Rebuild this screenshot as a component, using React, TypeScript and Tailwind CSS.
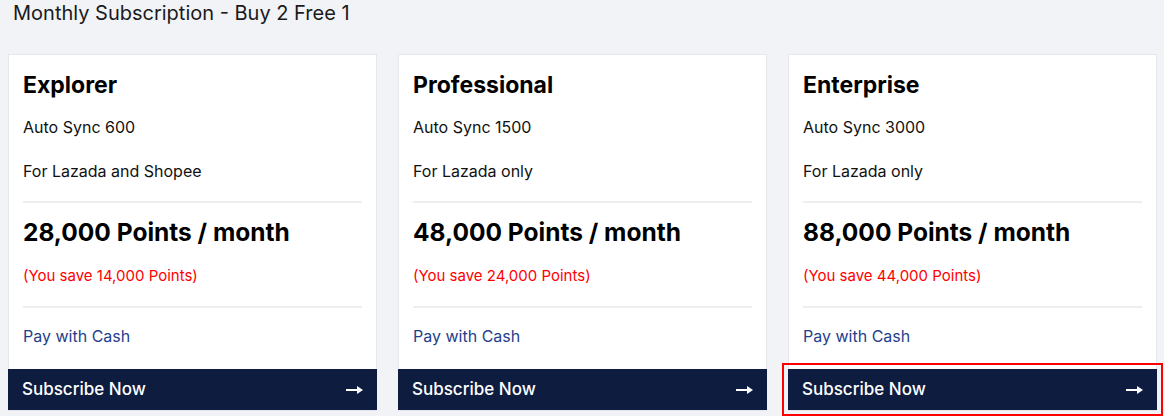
import React from "react";

const plans = [
  { name: "Explorer", sync: "Auto Sync 600", market: "For Lazada and Shopee", price: "28,000", save: "14,000" },
  { name: "Professional", sync: "Auto Sync 1500", market: "For Lazada only", price: "48,000", save: "24,000" },
  { name: "Enterprise", sync: "Auto Sync 3000", market: "For Lazada only", price: "88,000", save: "44,000" },
];

// small arrow: thin shaft, filled head
const Arrow = () => (
  <svg width="17" height="10" viewBox="0 0 17 10" fill="none">
    <rect x="0" y="4" width="12" height="2" fill="white" />
    <path d="M11 1l6 4-6 4z" fill="white" />
  </svg>
);

const App = () => {
  return (
    <div className="h-[416px] w-[1164px] overflow-hidden bg-[#f2f3f7] font-['Inter',sans-serif] text-[#111]">
      <h2 className="pl-[13px] pt-[1px] text-[20px] leading-[24px] font-normal text-[#1a1a1a]">
        Monthly Subscription - Buy 2 Free 1
      </h2>
      <div className="mt-[29px] grid grid-cols-3 gap-x-[21px] pl-[8px] pr-[7px]">
        {plans.map((p, i) => (
          <div key={p.name} className="flex flex-col border border-[#e6e7ea] bg-white">
            <div className="px-[14px] pt-[14px]">
              <h3 className="text-[23px] leading-[32px] font-bold text-black">{p.name}</h3>
              <p className="mt-[15px] text-[16px] leading-[22px]">{p.sync}</p>
              <p className="mt-[22px] text-[16px] leading-[22px]">{p.market}</p>
              <div className="mt-[19px] h-[2px] bg-[#eeeeee]" />
              <p className="mt-[12px] text-[24.5px] leading-[34px] font-bold text-black">{p.price} Points / month</p>
              <p className="mt-[16px] text-[15px] leading-[22px] text-[#ff0000]">(You save {p.save} Points)</p>
              <div className="mt-[19px] h-[2px] bg-[#eeeeee]" />
              <p className="mt-[17px] text-[16px] leading-[22px] text-[#243f8c]">Pay with Cash</p>
            </div>
            <button
              className={`-mx-px mt-[22px] flex h-[41px] items-center justify-between bg-[#0e1c3f] pl-[14px] pr-[14px] text-[17px] font-medium text-white ${
                i === 2 ? "outline-2 outline-offset-[4px] outline-[#ff0000]" : ""
              }`}
            >
              <span>Subscribe Now</span>
              <Arrow />
            </button>
          </div>
        ))}
      </div>
    </div>
  );
};

export default App;
